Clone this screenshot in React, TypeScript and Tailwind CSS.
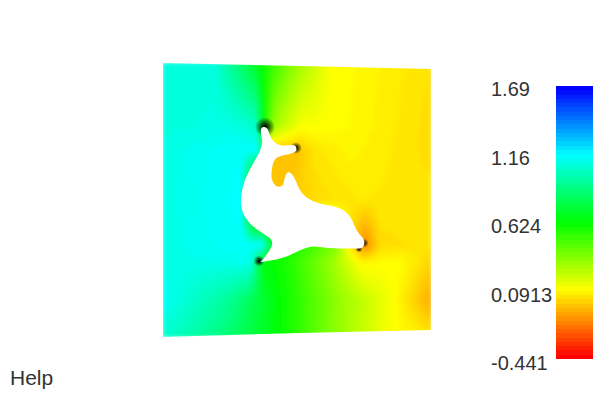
type Stops = [number, number][]

// hue samples of the field, row by row (y, then [x, hue] pairs)
const rows: [number, Stops][] = [
  [63, [[163, 172], [215, 172], [240, 145], [262, 120], [290, 90], [330, 61], [431, 53]]],
  [125, [[163, 172], [230, 174], [255, 168], [263, 122], [275, 82], [300, 62], [350, 59], [431, 52]]],
  [150, [[163, 174], [258, 180], [270, 46], [296, 46], [315, 54], [350, 58], [431, 52]]],
  [200, [[163, 174], [241, 180], [255, 46], [296, 48], [320, 52], [360, 55], [431, 54]]],
  [245, [[163, 174], [262, 180], [272, 125], [300, 112], [335, 92], [352, 50], [365, 32], [380, 52], [431, 54]]],
  [262, [[163, 174], [250, 176], [262, 125], [290, 112], [330, 85], [362, 58], [400, 60], [431, 50]]],
  [300, [[163, 178], [230, 155], [280, 120], [340, 85], [395, 60], [422, 45], [431, 40]]],
  [337, [[163, 170], [220, 150], [280, 120], [330, 90], [385, 62], [431, 55]]],
]

function along(stops: Stops, x: number) {
  if (x <= stops[0][0]) return stops[0][1]
  for (let i = 1; i < stops.length; i++) {
    if (x <= stops[i][0]) {
      const [x0, h0] = stops[i - 1]
      const [x1, h1] = stops[i]
      return h0 + ((h1 - h0) * (x - x0)) / (x1 - x0)
    }
  }
  return stops[stops.length - 1][1]
}

function hueAt(x: number, y: number) {
  for (let i = 1; i < rows.length; i++) {
    if (y <= rows[i][0]) {
      const t = (y - rows[i - 1][0]) / (rows[i][0] - rows[i - 1][0])
      return along(rows[i - 1][1], x) * (1 - t) + along(rows[i][1], x) * t
    }
  }
  return along(rows[rows.length - 1][1], x)
}

// one path per hue bucket, much lighter than thousands of rects
function buildBands() {
  const bands = new Map<number, string>()
  for (let y = 62; y < 338; y += 2) {
    for (let x = 162; x < 432; x += 2) {
      const h = Math.round(hueAt(x + 1, y + 1) / 2) * 2
      bands.set(h, (bands.get(h) ?? "") + `M${x} ${y}h2v2h-2z`)
    }
  }
  return [...bands.entries()]
}

const sheet = "M163 63L300 66L431 69L431 200L431 330L300 333L163 337L163 200Z"

// outline of the hole, the fin tip is doubled to keep it sharp
const outline: [number, number][] = [
  [261.5, 126.5], [267.5, 127.5], [270, 136], [274, 142.3], [281.7, 146], [291.7, 144.5], [296.5, 146], [296.5, 151.5],
  [290, 154], [280, 156], [275, 158.3], [272.3, 165], [271, 176.7], [273.3, 184], [278.3, 187.6], [283.6, 185],
  [284.3, 178.3], [287.3, 171.2], [291.7, 173.3], [295.7, 180], [299.3, 190], [306.7, 198.3], [320, 204], [336.7, 206.7],
  [346.7, 211.7], [352.3, 220], [356.7, 231.7], [363.3, 238], [365, 243.3], [362, 248.5], [353.3, 248.5], [326.7, 248.3],
  [313.3, 245.7], [300, 250], [283.3, 258.3], [260.5, 262], [260.5, 262], [265, 257.3], [275, 241.7], [263.3, 233.3], [250, 225],
  [241.7, 211.7], [240.5, 196.7], [245, 178.3], [253.3, 163.3], [263.3, 145], [260.5, 133],
]

function smoothPath(pts: [number, number][]) {
  const mid = (a: [number, number], b: [number, number]) => `${(a[0] + b[0]) / 2} ${(a[1] + b[1]) / 2}`
  let d = `M${mid(pts[pts.length - 1], pts[0])}`
  pts.forEach((p, i) => {
    d += `Q${p[0]} ${p[1]} ${mid(p, pts[(i + 1) % pts.length])}`
  })
  return d + "Z"
}

const tips = [
  { x: 265, y: 127, r: 10 },
  { x: 296, y: 148, r: 6 },
  { x: 364, y: 243, r: 4.5 },
  { x: 359, y: 249, r: 3.5 },
  { x: 259, y: 261, r: 5.5 },
]

const labels = ["1.69", "1.16", "0.624", "0.0913", "-0.441"]

function Field() {
  const bands = buildBands()
  return (
    <svg viewBox="162 62 270 276" className="w-[270px] h-[276px] block">
      <defs>
        <clipPath id="sheet">
          <path d={sheet} />
        </clipPath>
        <filter id="soft" x="-5%" y="-5%" width="110%" height="110%">
          <feGaussianBlur stdDeviation="2.2" />
        </filter>
        <radialGradient id="tip">
          <stop offset="0%" stopColor="#000" stopOpacity="1" />
          <stop offset="35%" stopColor="#000" stopOpacity="0.7" />
          <stop offset="100%" stopColor="#000" stopOpacity="0" />
        </radialGradient>
      </defs>
      <g clipPath="url(#sheet)">
        <g filter="url(#soft)">
          {bands.map(([h, d]) => (
            <path key={h} d={d} fill={`hsl(${h} 100% 50%)`} shapeRendering="crispEdges" />
          ))}
        </g>
        {tips.map((t) => (
          <circle key={t.x} cx={t.x} cy={t.y} r={t.r} fill="url(#tip)" />
        ))}
        <path d={smoothPath(outline)} fill="#fff" />
      </g>
    </svg>
  )
}

export default function App() {
  // 64 steps of the lookup table, blue on top
  const steps = Array.from({ length: 64 }, (_, i) => 240 - (i * 240) / 63)

  return (
    <div className="flex w-[600px] h-[400px] bg-white text-[#333] text-[20px] leading-none font-['Liberation_Sans',sans-serif]">
      <div className="flex flex-col justify-between w-[491px]">
        <div className="ml-[162px] mt-[62px]">
          <Field />
        </div>
        <div className="ml-[10px] mb-[12px] text-[21px]">Help</div>
      </div>
      <div className="flex flex-col justify-between w-[65px] h-[294px] mt-[79px]">
        {labels.map((label) => (
          <div key={label}>{label}</div>
        ))}
      </div>
      <div className="flex flex-col w-[37px] h-[273px] mt-[86px]">
        {steps.map((h) => (
          <div key={h} className="flex-1" style={{ background: `hsl(${h} 100% 50%)` }} />
        ))}
      </div>
    </div>
  )
}
